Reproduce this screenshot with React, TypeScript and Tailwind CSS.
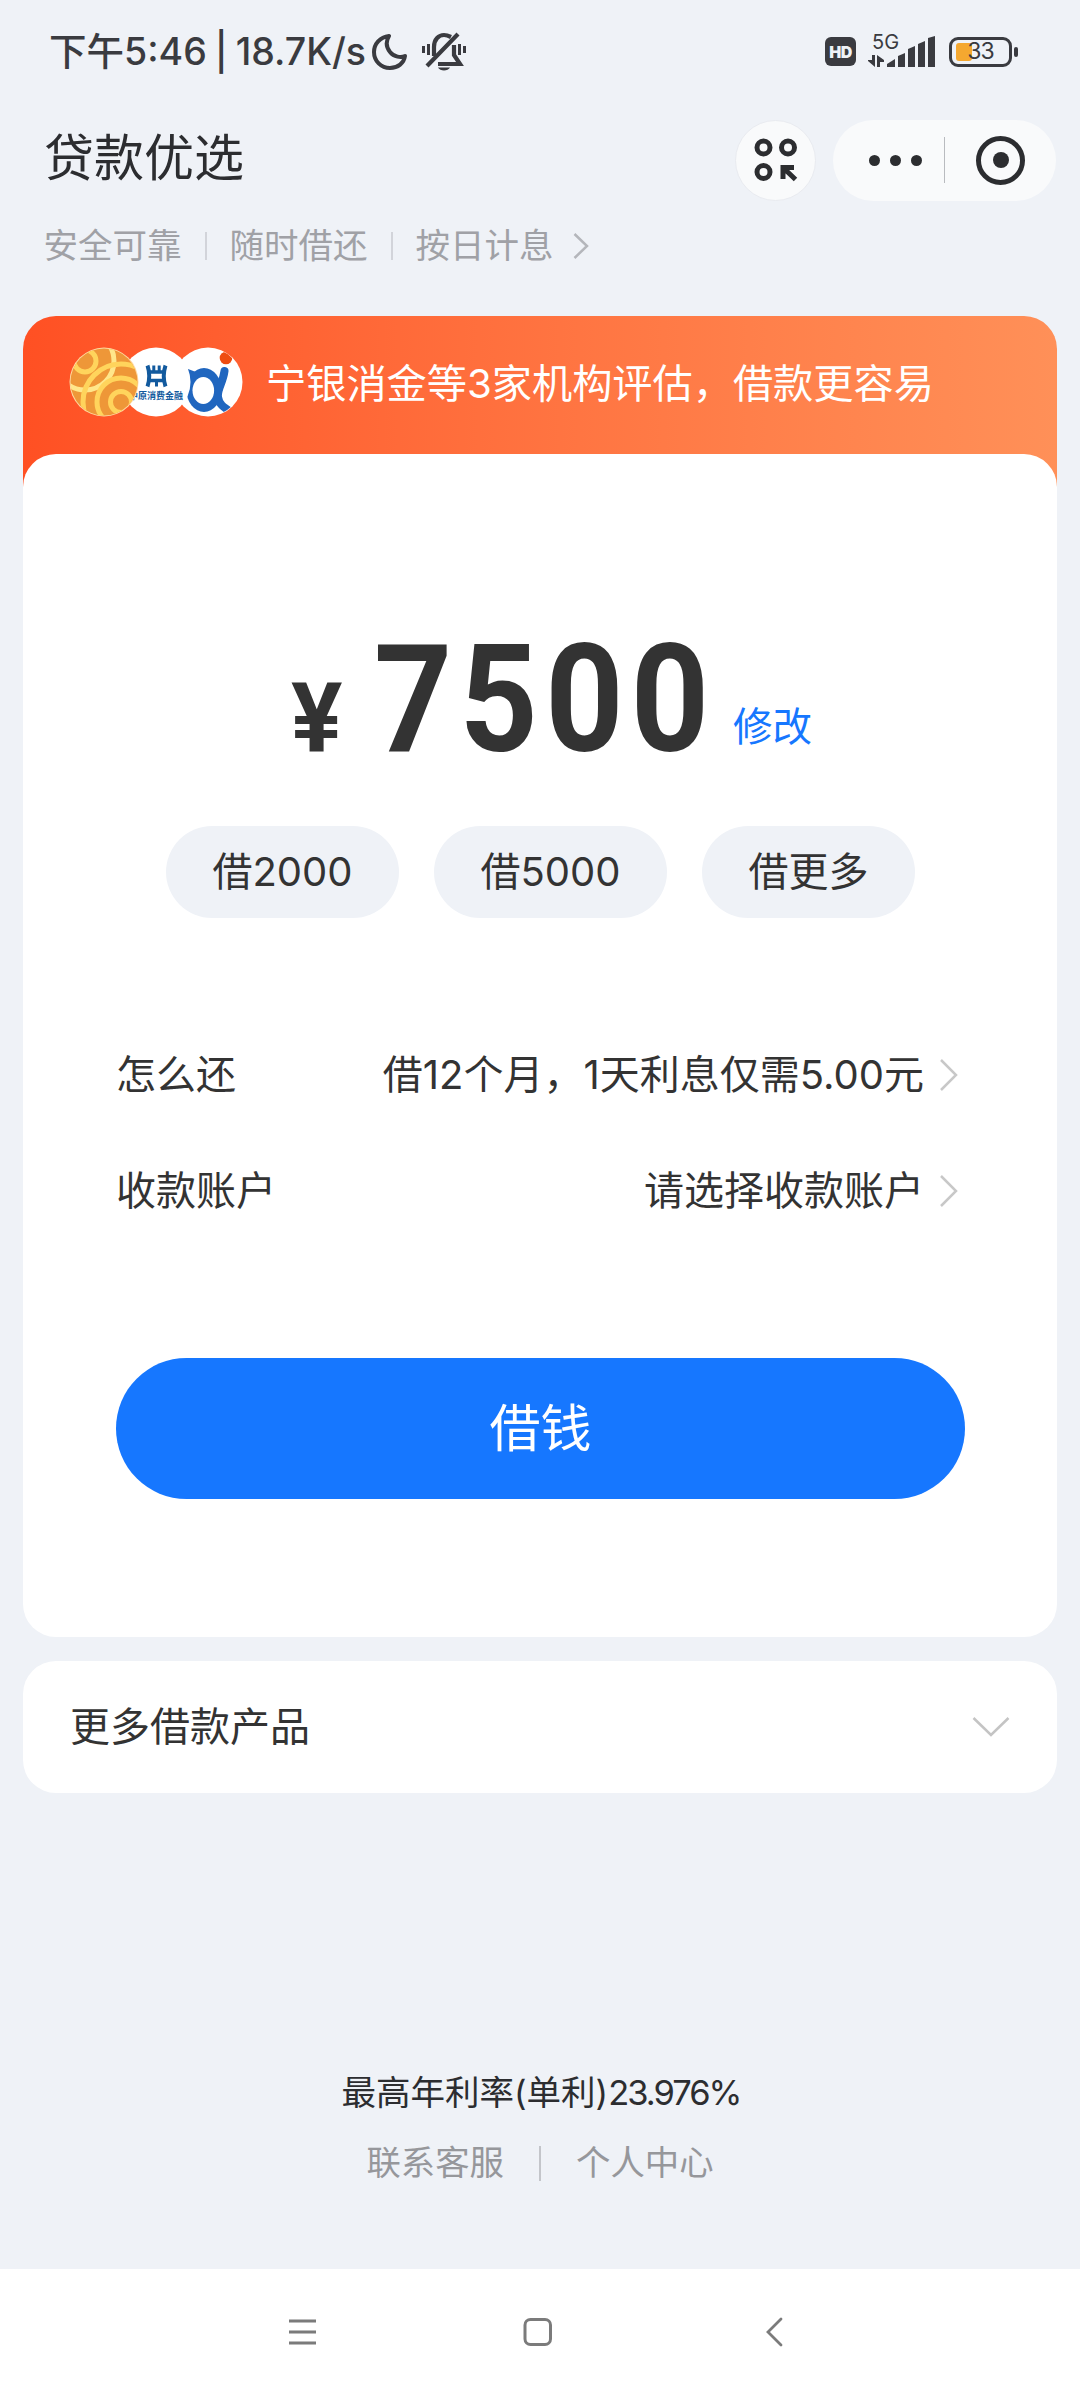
import type { ReactNode } from "react";

const QUICK_AMOUNTS = ["借2000", "借5000", "借更多"];

const SIGNAL_BARS = ["M0 31V28L8 23V31Z", "M11 31V20L18 17V31Z", "M21 31V13L28 10V31Z", "M31 31V8L38 5V31Z", "M41 31V2L48 0V31Z"];

function StatusBar() {
  return (
    <div className="flex h-[103px] items-center pl-[49px] pr-[62px] text-[#3a3b40]">
      <span className="whitespace-pre text-[37.5px] font-medium leading-none [word-spacing:-2px]">下午5:46 | 18.7K/s</span>
      <svg className="ml-[6px] h-9 w-9 shrink-0" viewBox="0 0 36 36" fill="none" stroke="currentColor" strokeWidth="4" strokeLinejoin="round">
        <path d="M17 2C8 3 2 10 2 18C2 27 9 34 18 34C26 34 32 29 33 22C29 24 22 23 18 18C14 13 14 7 17 2Z" />
      </svg>
      <svg className="ml-[14px] h-10 w-11 shrink-0" viewBox="0 0 44 40" fill="none" stroke="currentColor" strokeWidth="4.2">
        <path d="M12 24V15C12 7 17 3 22 3C25 3 27 4 29 5" />
        <path d="M5 34L36 2M32 13V23L38 32H16" />
        <path d="M1.500 14V21M6.500 12V23M37.500 12V23M42.500 14V21" strokeWidth="3" />
        <path d="M16 35.500H28C26 39.500 18 39.500 16 35.500Z" fill="currentColor" stroke="none" />
      </svg>

      <span className="ml-auto flex h-[29px] w-[31px] shrink-0 items-center justify-center rounded-[6px] bg-[#3a3b40] text-[16px] font-black leading-none tracking-[-0.5px] text-[#eff2f7]">
        HD
      </span>
      <div className="relative ml-3 h-[34px] w-[68px] shrink-0">
        <span className="absolute -top-[3px] left-1 text-[20px] leading-none">5G</span>
        <svg className="absolute left-0 top-5 h-3 w-4" viewBox="0 0 16 12" fill="currentColor">
          <path d="M4 0H7V12L0 6V5H4ZM9 12H12V7H16V5L9 0Z" />
        </svg>
        <svg className="absolute left-[19px] top-px h-[31px] w-12" viewBox="0 0 48 31" fill="currentColor">
          {SIGNAL_BARS.map((d) => (
            <path key={d} d={d} />
          ))}
        </svg>
      </div>
      <div className="relative ml-[13px] flex h-[30px] w-[63px] shrink-0 items-center justify-center rounded-[9px] border-[3px] border-[#3a3b40]">
        <span className="absolute left-1 top-[3px] h-[18px] w-4 rounded-[3px] bg-[#f5a830]" />
        <span className="relative text-[23px] leading-none tracking-[-1px]">33</span>
      </div>
      <span className="ml-0.5 h-2.5 w-1 shrink-0 rounded-full bg-[#3a3b40]" />
    </div>
  );
}

function Header() {
  return (
    <header>
      <div className="flex h-[114px] items-center pl-[44px] pr-6 text-[#2c2d30]">
        <h1 className="pb-[5px] text-[50px] font-normal leading-none">贷款优选</h1>
        <div className="ml-auto flex h-[81px] w-[81px] items-center justify-center rounded-full border border-[#e9ebf0] bg-[#f9fafb]">
          <svg className="h-11 w-11" viewBox="0 0 44 44" fill="none" stroke="currentColor" strokeWidth="5">
            <circle cx="9.500" cy="9.500" r="6.500" />
            <circle cx="34" cy="9.500" r="6.500" />
            <circle cx="9.500" cy="34" r="6.500" />
            <path d="M29 41V29.500H40M29.500 30L41.500 41.500" />
          </svg>
        </div>
        <div className="ml-[17px] flex h-[81px] w-[223px] items-center rounded-full bg-[#f9fafb]">
          <div className="ml-9 flex gap-[10px]">
            <span className="h-[11px] w-[11px] rounded-full bg-[#2c2d30]" />
            <span className="h-[11px] w-[11px] rounded-full bg-[#2c2d30]" />
            <span className="h-[11px] w-[11px] rounded-full bg-[#2c2d30]" />
          </div>
          <span className="ml-[22px] h-[46px] w-px bg-[#b9bbbf]" />
          <span className="ml-[31px] flex h-[49px] w-[49px] items-center justify-center rounded-full border-[5px] border-[#2c2d30]">
            <span className="h-4 w-4 rounded-full bg-[#2c2d30]" />
          </span>
        </div>
      </div>
      <div className="flex h-[58px] items-center pl-[43.500px] text-[34.500px] leading-none text-[#a0a1a6]">
        <span>安全可靠</span>
        <span className="mx-[23px] h-7 w-0.5 bg-[#d2d4da]" />
        <span>随时借还</span>
        <span className="mx-[23px] h-7 w-0.5 bg-[#d2d4da]" />
        <span>按日计息</span>
        <svg className="ml-[19px] h-7 w-4" viewBox="0 0 16 28" fill="none" stroke="#b4b6bb" strokeWidth="2.500">
          <path d="M1.500 2L14 14L1.500 26" />
        </svg>
      </div>
    </header>
  );
}

function LenderLogos() {
  return (
    <svg className="mb-[7px] h-[70px] w-[174px]" viewBox="0 0 174 70">
      <defs>
        <clipPath id="coin">
          <circle cx="35" cy="35" r="33.500" />
        </clipPath>
        <clipPath id="alpha">
          <circle cx="139" cy="35" r="34" />
        </clipPath>
      </defs>
      <circle cx="139" cy="35" r="34.500" fill="#fff" />
      <g clipPath="url(#alpha)">
        <ellipse cx="135" cy="43" rx="17.500" ry="22" fill="#2066bf" />
        <path d="M119 22L127 25L120 36Z" fill="#2066bf" />
        <path d="M155.500 24C154 36 148 42 149 50C150 57 154 60 162 65" fill="none" stroke="#2066bf" strokeWidth="8" strokeLinecap="round" />
        <ellipse cx="134.300" cy="43.500" rx="10.800" ry="13.500" fill="#fff" />
        <circle cx="157" cy="11" r="6.300" fill="#ee4d12" />
      </g>
      <circle cx="87" cy="35" r="34.500" fill="#fff" />
      <g fill="none" stroke="#125a9e">
        <path d="M78.500 18.500C81 26 81 32 78.500 39.500M96.500 18.500C94 26 94 32 96.500 39.500" strokeWidth="4" />
        <path d="M80 25H95M80 33.500H95" strokeWidth="3.600" />
        <path d="M84.800 18.500V25M90.200 18.500V25M87.500 33V39.500" strokeWidth="3" />
      </g>
      <text x="60" y="51.500" fill="#125a9e" fontSize="9" fontWeight="700">
        中原消费金融
      </text>
      <circle cx="35" cy="35" r="34.500" fill="#ffd9a0" />
      <g clipPath="url(#coin)" fill="none" stroke="#ffd45c" strokeWidth="5">
        <rect width="70" height="70" fill="#ee9738" stroke="none" />
        <circle cx="16" cy="14" r="11" />
        <circle cx="16" cy="14" r="29" stroke="#ffe68a" />
        <circle cx="52" cy="55" r="10.500" />
        <circle cx="52" cy="55" r="24" />
        <circle cx="52" cy="55" r="38" />
      </g>
    </svg>
  );
}

function DetailRow({ label, children }: { label: string; children: ReactNode }) {
  return (
    <div className="flex h-[116px] items-center pr-[7px] text-[40px] leading-none">
      <span>{label}</span>
      <span className="ml-auto">{children}</span>
      <svg className="ml-[16px] h-8 w-[18px]" viewBox="0 0 18 32" fill="none" stroke="#c8c8c8" strokeWidth="2.500">
        <path d="M1 1L16 16L1 31" />
      </svg>
    </div>
  );
}

function LoanCard() {
  return (
    <section className="mx-[23px] rounded-[33px] bg-linear-to-r from-[#ff5023] to-[#ff9058] bg-[length:100%_190px] bg-no-repeat">
      <div className="flex h-[138px] items-center pl-[46px] text-[40.200px] leading-none text-white">
        <LenderLogos />
        <span className="mb-px ml-[23px]">宁银消金等3家机构评估，借款更容易</span>
      </div>
      <div className="h-[1183px] rounded-[33px] bg-white pl-[93px] pr-[92px] pt-[176px] text-[#333]">
        <div className="flex h-[138px] items-baseline pl-[175px] font-['Roboto'] font-bold leading-[140px]">
          <span className="w-[83px] text-[96px]">¥</span>
          <span className="w-[359px] origin-left scale-x-[0.91] text-[150px] tracking-[8px]">7500</span>
          <button className="relative -top-[10px] font-['Inter','Noto_Sans_CJK_SC',sans-serif] text-[39.500px] font-normal text-[#1677ff]">
            修改
          </button>
        </div>
        <div className="mt-[58px] flex justify-center gap-[35px]">
          {QUICK_AMOUNTS.map((label) => (
            <button key={label} className="h-[92px] rounded-full bg-[#eff2f7] px-[46.500px] pb-px text-[40px] leading-none">
              {label}
            </button>
          ))}
        </div>
        <div className="mt-[99px]">
          <DetailRow label="怎么还">借12个月，1天利息仅需5.00元</DetailRow>
          <DetailRow label="收款账户">请选择收款账户</DetailRow>
        </div>
        <button className="mt-[109px] h-[141px] w-full rounded-full bg-[#1677ff] text-[51px] leading-none text-white">借钱</button>
      </div>
    </section>
  );
}

function Footer() {
  return (
    <footer className="mt-[275px] flex flex-col items-center leading-none">
      <p className="flex h-[50px] items-center pl-0.5 text-[34.500px] text-[#2c2d30]">
        最高年利率(单利)<span className="tracking-[-2px]">23.976%</span>
      </p>
      <div className="mt-5 flex h-[50px] items-center text-[34.400px] text-[#96979b]">
        <span>联系客服</span>
        <span className="mx-[35px] h-[35px] w-0.5 bg-[#c3c5ca]" />
        <span>个人中心</span>
      </div>
    </footer>
  );
}

function NavBar() {
  return (
    <nav className="mt-auto flex h-[131px] bg-white pl-[288px] pt-12 text-[#7b7b7b]">
      <svg className="h-[30px] w-7" viewBox="0 0 28 30" fill="none" stroke="currentColor" strokeWidth="3">
        <path d="M1 4H28M1 15H28M1 26H28" />
      </svg>
      <svg className="ml-[207px] h-[30px] w-[30px]" viewBox="0 0 30 30" fill="none" stroke="currentColor" strokeWidth="3">
        <rect x="2" y="2.500" width="25.500" height="25" rx="5.500" />
      </svg>
      <svg className="ml-[213px] h-[30px] w-[18px]" viewBox="0 0 18 30" fill="none" stroke="currentColor" strokeWidth="2.800" strokeLinecap="round">
        <path d="M15 2L2 15L15 28" />
      </svg>
    </nav>
  );
}

export default function App() {
  return (
    <div lang="zh-CN" className="flex h-[2400px] w-[1080px] flex-col overflow-hidden bg-[#eff2f7] font-['Inter','Noto_Sans_CJK_SC',sans-serif]">
      <StatusBar />
      <Header />
      <div className="mt-[41px]">
        <LoanCard />
      </div>
      <section className="mx-[23px] mt-6 flex h-[132px] items-center justify-between rounded-[33px] bg-white px-[47px] text-[40px] leading-none text-[#333]">
        <span>更多借款产品</span>
        <svg className="h-5 w-[38px]" viewBox="0 0 38 20" fill="none" stroke="#c4c4c4" strokeWidth="2.500">
          <path d="M1.500 1L19 18L36.500 1" />
        </svg>
      </section>
      <Footer />
      <NavBar />
    </div>
  );
}
